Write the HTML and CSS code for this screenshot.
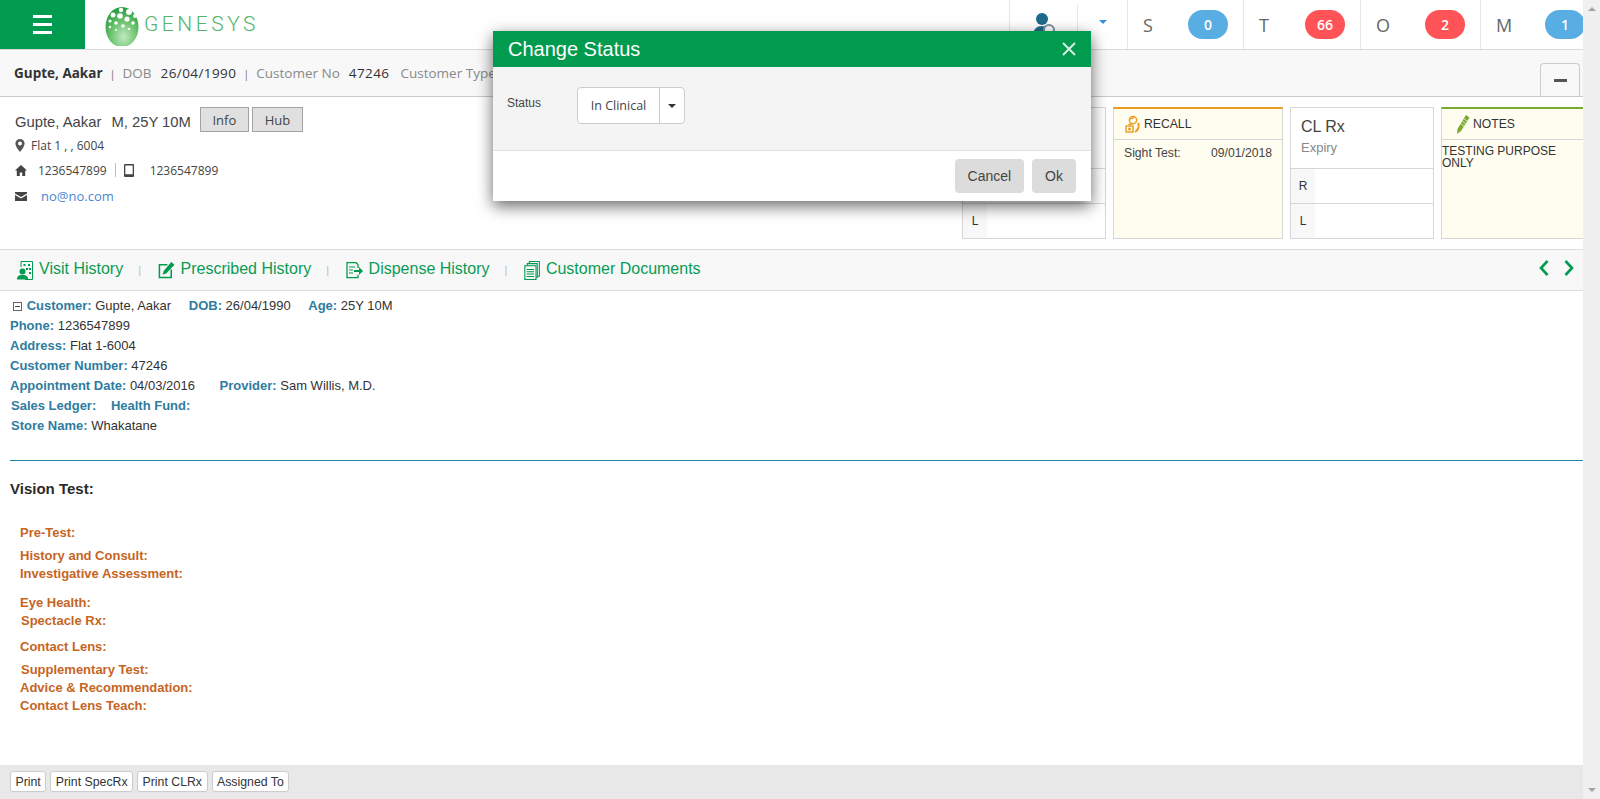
FILE: index.html
```html
<!DOCTYPE html>
<html lang="en">
<head>
  <meta charset="UTF-8" />
  <title>Genesys - Customer</title>
  <link rel="stylesheet" href="styles.css">
</head>
<body>
  <div class="page">
    <div class="main">
      <header class="topbar">
        <button class="menu-btn"><span></span><span></span><span></span></button>
        <div class="logo">
          <svg width="40" height="42" viewBox="0 0 40 42">
            <defs>
              <radialGradient id="ball" cx="55%" cy="75%" r="70%">
                <stop offset="0" stop-color="#c4e8c4" />
                <stop offset="0.5" stop-color="#74c876" />
                <stop offset="1" stop-color="#2f9e44" />
              </radialGradient>
            </defs>
            <ellipse cx="18" cy="23" rx="16.500" ry="20" fill="url(#ball)" />
            <g fill="#fff">
              <circle cx="9" cy="11" r="2.500" /><circle cx="17" cy="6" r="2.200" /><circle cx="25" cy="8" r="3" />
              <circle cx="16" cy="12" r="2.800" /><circle cx="31" cy="12" r="2" /><circle cx="6" cy="17" r="1.600" />
              <circle cx="12" cy="19" r="1.800" /><circle cx="23" cy="15" r="2.600" /><circle cx="29" cy="19" r="1.800" />
              <circle cx="6" cy="23" r="1.200" /><circle cx="19" cy="22" r="1.800" /><circle cx="25" cy="25" r="1.300" />
              <circle cx="12" cy="26" r="1.100" />
            </g>
          </svg>
          <span class="logo-text">GENESYS</span>
        </div>
        <div class="top-right">
          <div class="user-cell">
            <svg width="24" height="24" viewBox="0 0 24 24">
              <circle cx="10" cy="7" r="6" fill="#1f6a8c" />
              <path d="M1 24c0-7 4-10 9-10s9 3 9 10z" fill="#1f6a8c" />
              <circle cx="17" cy="18" r="5" fill="#fff" stroke="#7b93a0" stroke-width="2" />
            </svg>
          </div>
          <div class="caret-cell"><span class="caret-blue"></span></div>
          <div class="count-cell s-cell"><span class="count-label">S</span><span class="badge blue">0</span></div>
          <div class="count-cell"><span class="count-label">T</span><span class="badge red">66</span></div>
          <div class="count-cell wide"><span class="count-label">O</span><span class="badge red">2</span></div>
          <div class="count-cell wide"><span class="count-label">M</span><span class="badge blue">1</span></div>
        </div>
      </header>

      <div class="subheader">
        <b class="sub-name">Gupte, Aakar</b>
        <span class="sub-sep">|</span>
        <span class="sub-key">DOB</span>
        <span class="sub-val">26/04/1990</span>
        <span class="sub-sep">|</span>
        <span class="sub-key">Customer No</span>
        <span class="sub-val wide">47246</span>
        <span class="sub-key">Customer Type</span>
        <button class="collapse-btn"><span></span></button>
      </div>

      <section class="info">
        <div class="info-left">
          <div class="info-name">
            <span>Gupte, Aakar</span><span class="info-age">M, 25Y 10M</span>
            <button class="info-btn">Info</button>
            <button class="info-btn hub">Hub</button>
          </div>
          <div class="info-line address">
            <svg width="10" height="13" viewBox="0 0 10 13"><path fill-rule="evenodd" d="M5 0a4.600 4.600 0 0 0-4.600 4.600C.4 8 5 13 5 13s4.600-5 4.600-8.400A4.600 4.600 0 0 0 5 0zm0 2.600a2 2 0 1 1 0 4 2 2 0 0 1 0-4z" fill="#555" /></svg>
            <span>Flat 1 , , 6004</span>
          </div>
          <div class="info-line phones">
            <svg width="12" height="11" viewBox="0 0 12 11"><path d="M6 0L0 5.500h1.800V11h3V7.500h2.400V11h3V5.500H12z" fill="#444" /></svg>
            <span class="phone">1236547899</span>
            <span class="phone-sep"></span>
            <svg width="10" height="13" viewBox="0 0 10 13"><path fill-rule="evenodd" d="M1 0h8a1 1 0 0 1 1 1v11a1 1 0 0 1-1 1H1a1 1 0 0 1-1-1V1a1 1 0 0 1 1-1zm.3 1.400v8.800h7.400V1.400z" fill="#444" /></svg>
            <span class="phone second">1236547899</span>
          </div>
          <div class="info-line email">
            <svg width="12" height="9" viewBox="0 0 12 9"><path d="M0 0h12v1.500L6 5 0 1.500zM0 3l6 3.500L12 3v6H0z" fill="#444" /></svg>
            <a class="email-link">no@no.com</a>
          </div>
        </div>

        <div class="cards">
          <div class="card rx-card">
            <div class="rx-head"></div>
            <div class="rx-row"><span class="rx-eye"></span></div>
            <div class="rx-row"><span class="rx-eye">L</span></div>
          </div>
          <div class="card note-card recall">
            <div class="note-head">
              <svg width="16" height="18" viewBox="0 0 16 18" fill="none" stroke="#e89d20" stroke-width="1.400">
                <circle cx="8" cy="5" r="3.600" /><path d="M4.500 4c2 0 4-1 5-2.500M3.500 10c1-1 2.500-1.200 4.500-1.200" />
                <rect x="1" y="11" width="7" height="6" /><path d="M4.500 12.500v3M3 14h3" />
                <path d="M13 8c1.500 3 .5 7-3 9" stroke-width="2" />
              </svg>
              <span>RECALL</span>
            </div>
            <div class="recall-line"><span>Sight Test:</span><span>09/01/2018</span></div>
          </div>
          <div class="card rx-card">
            <div class="rx-head"><div class="rx-title">CL Rx</div><div class="rx-sub">Expiry</div></div>
            <div class="rx-row"><span class="rx-eye">R</span></div>
            <div class="rx-row"><span class="rx-eye">L</span></div>
          </div>
          <div class="card note-card notes">
            <div class="note-head">
              <svg width="14" height="19" viewBox="0 0 14 19"><path d="M10 0l3.500 2.500L5 16l-4 3 .5-5z" fill="#7aab2e" /><path d="M8 4l3 2M6.500 6.500l3 2M5 9l3 2" stroke="#fff" stroke-width=".7" /></svg>
              <span>NOTES</span>
            </div>
            <div class="notes-text">TESTING PURPOSE ONLY</div>
          </div>
        </div>
      </section>

      <nav class="tabs">
        <a class="tab">
          <svg width="16" height="19" viewBox="0 0 16 19"><path d="M4 6V.5h11.500v18H8" fill="none" stroke="#009b4e" /><path d="M6.500 3h2v2h-2zM11 3h2v2h-2zM9 7h2v2H9zM12 7h2v2h-2zM12 11h2v2h-2z" fill="#009b4e" /><circle cx="5.500" cy="10.500" r="3" fill="#009b4e" /><path d="M0 18.500c0-3 1-4.500 5.500-4.500s5.500 1.500 5.500 4.500z" fill="#009b4e" /></svg>
          <span>Visit History</span>
        </a>
        <span class="tab-sep">|</span>
        <a class="tab">
          <svg width="17" height="17" viewBox="0 0 18 18"><path d="M10 3H1.500v13.500H14V8" fill="none" stroke="#009b4e" stroke-width="1.600" /><path d="M14 0l3.500 3L9 12l-4 1.500L6 9.500z" fill="#009b4e" /></svg>
          <span>Prescribed History</span>
        </a>
        <span class="tab-sep">|</span>
        <a class="tab">
          <svg width="17" height="17" viewBox="0 0 17 17"><path d="M12 6V2.500L10 .7H1v15h11v-3" fill="none" stroke="#009b4e" stroke-width="1.300" /><path d="M3 5h6M3 8h4M3 11h4" stroke="#009b4e" stroke-width="1.200" /><path d="M8 8h5V5l4 4-4 4v-3H8z" fill="#009b4e" /></svg>
          <span>Dispense History</span>
        </a>
        <span class="tab-sep">|</span>
        <a class="tab">
          <svg width="16" height="19" viewBox="0 0 15 18" fill="none" stroke="#009b4e"><path d="M5 2.500V.5h9.500v14h-2" /><path d="M3 4.500V2.500h9.500v13h-1" /><rect x=".7" y="4.500" width="10.600" height="13" /><path d="M2.500 8h7M2.500 10.200h7M2.500 12.400h7M2.500 14.600h7" /></svg>
          <span>Customer Documents</span>
        </a>
        <div class="tab-arrows">
          <svg width="10" height="16" viewBox="0 0 10 16"><path d="M8.500 1L2 8l6.500 7" fill="none" stroke="#009b4e" stroke-width="2.600" /></svg>
          <svg width="10" height="16" viewBox="0 0 10 16"><path d="M1.500 1L8 8l-6.500 7" fill="none" stroke="#009b4e" stroke-width="2.600" /></svg>
        </div>
      </nav>

      <div class="content">
        <div class="detail-row first">
          <span class="tree-toggle"></span>
          <b>Customer:</b> Gupte, Aakar
          <b class="gap">DOB:</b> 26/04/1990
          <b class="gap">Age:</b> 25Y 10M
        </div>
        <div class="detail-row"><b>Phone:</b> 1236547899</div>
        <div class="detail-row"><b>Address:</b> Flat 1-6004</div>
        <div class="detail-row"><b>Customer Number:</b> 47246</div>
        <div class="detail-row"><b>Appointment Date:</b> 04/03/2016 <b class="gap-wide">Provider:</b> Sam Willis, M.D.</div>
        <div class="detail-row shift"><b>Sales Ledger:</b> <b class="gap-small">Health Fund:</b></div>
        <div class="detail-row shift"><b>Store Name:</b> Whakatane</div>

        <hr class="rule" />
        <h3 class="vision-title">Vision Test:</h3>

        <div class="tests">
          <div class="test">Pre-Test:</div>
          <div class="test m5">History and Consult:</div>
          <div class="test">Investigative Assessment:</div>
          <div class="test m11">Eye Health:</div>
          <div class="test shift">Spectacle Rx:</div>
          <div class="test m8">Contact Lens:</div>
          <div class="test m5 shift">Supplementary Test:</div>
          <div class="test">Advice &amp; Recommendation:</div>
          <div class="test">Contact Lens Teach:</div>
        </div>
      </div>

      <footer class="bottombar">
        <button class="print-btn">Print</button>
        <button class="print-btn">Print SpecRx</button>
        <button class="print-btn">Print CLRx</button>
        <button class="print-btn">Assigned To</button>
      </footer>
    </div>
    <div class="scrollbar"><span class="scroll-up"></span><span class="scroll-down"></span></div>
  </div>

  <div class="modal">
    <div class="modal-head">
      <span>Change Status</span>
      <svg width="14" height="14" viewBox="0 0 14 14"><path d="M1 1l12 12M13 1L1 13" stroke="#d5efe0" stroke-width="2" /></svg>
    </div>
    <div class="modal-body">
      <label class="status-label">Status</label>
      <div class="status-select">
        <span class="status-value">In Clinical</span>
        <span class="status-caret"><i></i></span>
      </div>
    </div>
    <div class="modal-foot">
      <button class="modal-btn">Cancel</button>
      <button class="modal-btn">Ok</button>
    </div>
  </div>
</body>
</html>
```

FILE: styles.css
```css
html, body {
  margin: 0;
  padding: 0;
  height: 799px;
  overflow: hidden;
  background-color: #fff;
  font-family: 'Liberation Sans', Arial, sans-serif;
  color: #333;
}
button {
  font-family: inherit;
  cursor: pointer;
}
.page {
  display: flex;
  height: 799px;
}
.main {
  width: 1583px;
  flex: none;
  display: flex;
  flex-direction: column;
  overflow: hidden;
}
.scrollbar {
  flex: 1;
  background-color: #f0f0f0;
  display: flex;
  flex-direction: column;
  align-items: center;
  justify-content: space-between;
  padding: 7px 0;
}
.scroll-up {
  width: 0;
  height: 0;
  border-left: 4px solid transparent;
  border-right: 4px solid transparent;
  border-bottom: 4px solid #a3a3a3;
}
.scroll-down {
  width: 0;
  height: 0;
  border-left: 4px solid transparent;
  border-right: 4px solid transparent;
  border-top: 4px solid #a3a3a3;
}

/* top bar */
.topbar {
  display: flex;
  flex: none;
  height: 49px;
  border-bottom: 1px solid #d9d9d9;
}
.menu-btn {
  width: 85px;
  flex: none;
  border: 0;
  padding: 0;
  background-color: #009b4e;
  display: flex;
  flex-direction: column;
  align-items: center;
  justify-content: center;
  gap: 5px;
}
.menu-btn span {
  width: 19px;
  height: 3px;
  background-color: #fff;
}
.logo {
  display: flex;
  align-items: center;
  margin-left: 19px;
}
.logo-text {
  font-family: Roboto, sans-serif;
  font-weight: 300;
  font-size: 21px;
  letter-spacing: 3.500px;
  color: #55b36a;
  margin-top: -2px;
}
.top-right {
  display: flex;
  margin-left: auto;
  width: 574px;
  flex: none;
}
.user-cell {
  width: 68px;
  flex: none;
  border-left: 1px solid #e6e6e6;
  box-sizing: border-box;
  display: flex;
  justify-content: center;
  padding-top: 12px;
}
.caret-cell {
  width: 50px;
  flex: none;
  box-sizing: border-box;
  border-left: 1px solid #e6e6e6;
  display: flex;
  justify-content: center;
  margin-top: 5px;
  height: 44px;
  padding-top: 15px;
}
.caret-blue {
  width: 0;
  height: 0;
  border-left: 4px solid transparent;
  border-right: 4px solid transparent;
  border-top: 4px solid #3a8fd6;
}
.count-cell {
  width: 117px;
  flex: none;
  box-sizing: border-box;
  border-left: 1px solid #e6e6e6;
  display: flex;
  align-items: center;
  justify-content: space-between;
  padding: 0 15px;
}
.count-cell.s-cell { width: 116px; }
.count-cell.wide { width: 120px; }
.count-label {
  font-family: 'Open Sans', sans-serif;
  font-size: 18px;
  color: #666;
}
.badge {
  width: 40px;
  height: 29px;
  border-radius: 15px;
  margin-top: -1px;
  display: flex;
  align-items: center;
  justify-content: center;
  color: #fff;
  font-family: 'Open Sans', sans-serif;
  font-size: 14px;
  font-weight: 600;
  flex: none;
}
.badge.blue { background-color: #58ade3; }
.badge.red { background-color: #ff5357; }

/* customer strip */
.subheader {
  display: flex;
  flex: none;
  align-items: center;
  height: 46px;
  background-color: #f8f8f8;
  border-bottom: 1px solid #c9c9c9;
  padding-left: 14px;
  font-family: 'Open Sans', sans-serif;
  font-size: 13.500px;
}
.sub-name {
  color: #333;
  margin-right: 7px;
}
.sub-sep {
  color: #777;
  font-size: 11px;
  margin-right: 7px;
}
.sub-key {
  color: #888;
  margin-right: 9px;
}
.sub-val {
  color: #333;
  letter-spacing: 0.400px;
  margin-right: 7px;
}
.sub-val.wide {
  margin-right: 11px;
}
.collapse-btn {
  margin-left: auto;
  margin-right: 3px;
  align-self: flex-end;
  width: 40px;
  height: 33px;
  padding: 0;
  background-color: #f8f8f8;
  border: 1px solid #ccc;
  border-bottom: 0;
  border-radius: 4px 4px 0 0;
  display: flex;
  align-items: center;
  justify-content: center;
}
.collapse-btn span {
  width: 13px;
  height: 3px;
  background-color: #555;
}

/* customer info + cards */
.info {
  display: flex;
  flex: none;
  height: 152px;
  border-bottom: 1px solid #ddd;
}
.info-left {
  width: 962px;
  flex: none;
  box-sizing: border-box;
  padding: 10px 0 0 15px;
}
.info-name {
  display: flex;
  align-items: center;
  font-size: 14.800px;
  color: #444;
  height: 25px;
}
.info-name span {
  margin-top: 4px;
}
.info-age {
  margin-left: 10px;
}
.info-btn {
  height: 25px;
  width: 49px;
  margin-left: 9px;
  padding: 0;
  background-color: #e0e0e0;
  border: 1px solid #a3a3a3;
  font-family: 'Open Sans', sans-serif;
  font-size: 13px;
  color: #444;
}
.info-btn.hub {
  width: 51px;
  margin-left: 3px;
}
.info-line {
  display: flex;
  align-items: center;
  font-family: 'Open Sans', sans-serif;
  font-size: 12px;
  color: #444;
}
.address {
  margin-top: 4px;
  height: 18px;
  gap: 6px;
}
.phones {
  margin-top: 7px;
  height: 18px;
}
.phone {
  margin-left: 11px;
}
.phone-sep {
  width: 1px;
  height: 14px;
  background-color: #e9b867;
  margin: 0 8px;
}
.phone.second {
  margin-left: 16px;
}
.email {
  margin-top: 8px;
  height: 18px;
}
.email-link {
  margin-left: 14px;
  font-size: 13px;
  color: #4a86d6;
}
.cards {
  display: flex;
  gap: 7px;
  margin-top: 10px;
  height: 132px;
}
.card {
  flex: none;
  box-sizing: border-box;
  height: 132px;
  border: 1px solid #d6d6d6;
  display: flex;
  flex-direction: column;
}
.rx-card { width: 144px; }
.rx-head {
  height: 60px;
  flex: none;
  box-sizing: border-box;
  padding: 10px 10px 0;
}
.rx-title {
  font-size: 16px;
  color: #444;
  line-height: 18px;
}
.rx-sub {
  margin-top: 4px;
  font-size: 13px;
  color: #888;
}
.rx-row {
  height: 35px;
  flex: none;
  box-sizing: border-box;
  border-top: 1px solid #d6d6d6;
  display: flex;
}
.rx-row:last-child {
  flex: 1;
}
.rx-eye {
  width: 24px;
  background-color: #f8f8f8;
  font-size: 12px;
  color: #333;
  display: flex;
  align-items: center;
  justify-content: center;
}
.note-card {
  background-color: #fffdf0;
  border-top-width: 2px;
}
.recall {
  width: 170px;
  border-top-color: #e89d20;
}
.notes {
  width: 165px;
  border-top-color: #76ab2e;
}
.note-head {
  height: 30px;
  flex: none;
  border-bottom: 1px solid #d6d6d6;
  display: flex;
  align-items: center;
  gap: 3px;
  padding-left: 11px;
  font-size: 12.200px;
  color: #333;
}
.notes .note-head {
  padding-left: 14px;
}
.recall-line {
  display: flex;
  justify-content: space-between;
  padding: 6px 10px 0;
  font-size: 12.200px;
  color: #444;
}
.notes-text {
  font-size: 12px;
  line-height: 12px;
  width: 130px;
  padding-top: 5px;
  color: #333;
}

/* history tabs */
.tabs {
  display: flex;
  flex: none;
  align-items: center;
  height: 41px;
  box-sizing: border-box;
  background-color: #f8f8f8;
  border-bottom: 1px solid #ddd;
  padding-left: 17px;
  font-size: 16px;
  color: #0a9b55;
}
.tab {
  display: flex;
  align-items: center;
  gap: 6px;
}
.tab span {
  margin-top: -3px;
}
.tab-sep {
  margin: 0 16.500px 0 15px;
  color: #bbb;
  font-size: 11px;
}
.tab-arrows {
  margin-left: auto;
  margin-right: 9px;
  margin-top: -4px;
  display: flex;
  gap: 15px;
}

/* report */
.content {
  flex: 1;
  padding: 5px 0 0 10px;
  font-size: 13px;
  color: #333;
}
.detail-row {
  height: 20px;
  line-height: 20px;
}
.detail-row b {
  color: #2f7c9f;
}
.detail-row.first {
  padding-left: 3px;
}
.detail-row.shift {
  padding-left: 1px;
}
.tree-toggle {
  display: inline-block;
  width: 7px;
  height: 7px;
  border: 1px solid #666;
  margin-right: 1px;
  vertical-align: -1px;
  background: linear-gradient(#444, #444) center / 5px 1px no-repeat;
}
.gap { margin-left: 14px; }
.gap-small { margin-left: 11px; }
.gap-wide { margin-left: 21px; }
.rule {
  margin: 24px 0 0;
  border: 0;
  border-top: 1px solid #1a8aa0;
}
.vision-title {
  margin: 19px 0 0;
  font-size: 15px;
  line-height: 18px;
  font-weight: bold;
  color: #2b2b2b;
}
.tests {
  margin-top: 26px;
  padding-left: 10px;
}
.test {
  height: 18px;
  line-height: 18px;
  font-size: 13px;
  font-weight: bold;
  color: #c6651f;
}
.test.shift { padding-left: 1px; }
.m5 { margin-top: 5px; }
.m8 { margin-top: 8px; }
.m11 { margin-top: 11px; }

/* bottom buttons */
.bottombar {
  flex: none;
  height: 34px;
  box-sizing: border-box;
  background-color: #e8e8e8;
  padding: 6px 0 0 10px;
  display: flex;
  align-items: flex-start;
  gap: 4px;
}
.print-btn {
  height: 21px;
  padding: 0 4.500px;
  background-color: #fff;
  border: 1px solid #ccc;
  border-radius: 3px;
  font-size: 12.300px;
  color: #333;
}

/* change status dialog */
.modal {
  position: absolute;
  left: 493px;
  top: 31px;
  width: 598px;
  height: 170px;
  background-color: #fff;
  box-shadow: 0 5px 15px rgba(0, 0, 0, 0.6);
  display: flex;
  flex-direction: column;
}
.modal-head {
  height: 36px;
  flex: none;
  background-color: #009b4e;
  color: #fff;
  font-size: 20px;
  display: flex;
  align-items: center;
  justify-content: space-between;
  padding: 0 15px;
}
.modal-body {
  height: 84px;
  flex: none;
  box-sizing: border-box;
  background-color: #f4f4f4;
  border-bottom: 1px solid #e0e0e0;
  padding: 20px 0 0 14px;
  display: flex;
  align-items: flex-start;
}
.status-label {
  width: 70px;
  flex: none;
  font-size: 12px;
  line-height: 30px;
  margin-top: 1px;
  color: #444;
}
.status-select {
  display: flex;
  width: 108px;
  height: 37px;
  box-sizing: border-box;
  background-color: #fff;
  border: 1px solid #ccc;
  border-radius: 4px;
}
.status-value {
  flex: 1;
  display: flex;
  align-items: center;
  justify-content: center;
  font-family: 'Open Sans', sans-serif;
  font-size: 12.500px;
  color: #444;
  border-right: 1px solid #ccc;
}
.status-caret {
  width: 24px;
  flex: none;
  display: flex;
  align-items: center;
  justify-content: center;
}
.status-caret i {
  width: 0;
  height: 0;
  border-left: 4px solid transparent;
  border-right: 4px solid transparent;
  border-top: 4px solid #333;
}
.modal-foot {
  flex: 1;
  display: flex;
  justify-content: flex-end;
  gap: 8px;
  padding: 8px 15px 0 0;
  align-items: flex-start;
}
.modal-btn {
  height: 34px;
  padding: 0 13px;
  border: 0;
  border-radius: 4px;
  background-color: #dcdcdc;
  font-size: 14px;
  color: #444;
}
```
